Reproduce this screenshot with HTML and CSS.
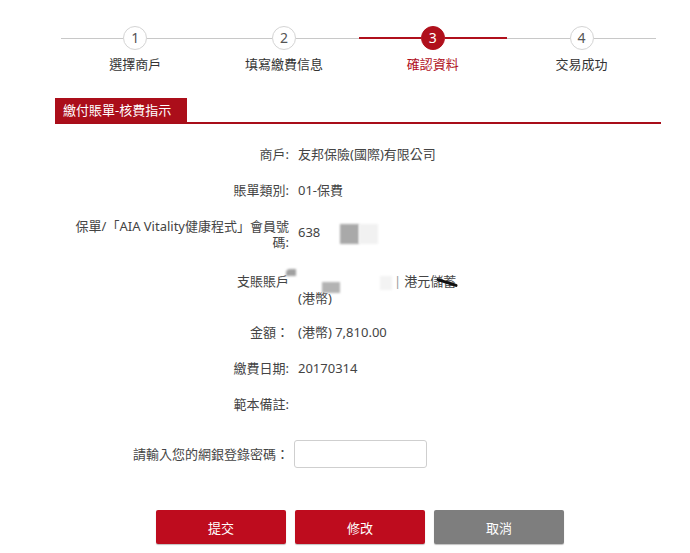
FILE: index.html
```html
<!DOCTYPE html>
<html lang="zh-Hant">
<head>
<meta charset="utf-8">
<title>確認資料</title>
<link rel="stylesheet" href="styles.css">
</head>
<body>
<div class="page">
  <div class="steps">
    <div class="step">
      <div class="track"><span class="line"></span><span class="circle">1</span><span class="line"></span></div>
      <div class="step-label">選擇商戶</div>
    </div>
    <div class="step">
      <div class="track"><span class="line"></span><span class="circle">2</span><span class="line"></span></div>
      <div class="step-label">填寫繳費信息</div>
    </div>
    <div class="step active">
      <div class="track"><span class="line"></span><span class="circle">3</span><span class="line"></span></div>
      <div class="step-label">確認資料</div>
    </div>
    <div class="step">
      <div class="track"><span class="line"></span><span class="circle">4</span><span class="line"></span></div>
      <div class="step-label">交易成功</div>
    </div>
  </div>

  <div class="section-head"><span class="tab">繳付賬單-核費指示</span></div>

  <div class="form">
    <div class="row">
      <div class="label">商戶:</div>
      <div class="value">友邦保險(國際)有限公司</div>
    </div>
    <div class="row">
      <div class="label">賬單類別:</div>
      <div class="value">01-保費</div>
    </div>
    <div class="row">
      <div class="label">保單/「AIA Vitality健康程式」會員號碼:</div>
      <div class="value">638<span class="blob blob-a"></span><span class="blob blob-b"></span></div>
    </div>
    <div class="row top">
      <div class="label">支賬賬戶</div>
      <div class="value">
        <div class="acct-line"><span class="blob blob-c"></span><span class="blob blob-d"></span><span class="blob blob-e"></span><span class="sep">|</span>港元<span class="scribble">儲蓄</span></div>
        <div>(港幣)</div>
      </div>
    </div>
    <div class="row after-top">
      <div class="label">金額：</div>
      <div class="value">(港幣) 7,810.00</div>
    </div>
    <div class="row">
      <div class="label">繳費日期:</div>
      <div class="value">20170314</div>
    </div>
    <div class="row">
      <div class="label">範本備註:</div>
      <div class="value"></div>
    </div>
    <div class="row pwd">
      <div class="label">請輸入您的網銀登錄密碼：</div>
      <div class="value"><input class="pwd-input" type="password"></div>
    </div>
  </div>

  <div class="actions">
    <button class="btn btn-red">提交</button>
    <button class="btn btn-red">修改</button>
    <button class="btn btn-grey">取消</button>
  </div>
</div>
</body>
</html>
```
FILE: styles.css
```css
* { box-sizing: border-box; }
body {
  margin: 0;
  background: #fff;
  font-family: "Noto Sans", "Noto Sans CJK TC", sans-serif;
  font-size: 13px;
  color: #444;
}
.page {
  width: 690px;
  height: 553px;
  overflow: hidden;
  padding-top: 26px;
}
.steps {
  display: flex;
  margin-left: 61px;
  width: 595px;
}
.step { flex: 1; display: flex; flex-direction: column; align-items: center; }
.track { display: flex; align-items: center; width: 100%; height: 24px; }
.line { flex: 1; height: 1px; background: #c8c8c8; }
.circle {
  width: 24px; height: 24px;
  border: 1px solid #d4d4d4;
  border-radius: 50%;
  display: flex; align-items: center; justify-content: center;
  font-size: 14px; color: #555; background: #fff;
  line-height: 1;
}
.step-label { margin-top: 5px; color: #333; line-height: 18px; }
.step.active .line { height: 2px; background: #b0101c; }
.step.active .circle { background: #b0101c; border-color: #b0101c; color: #fff; }
.step.active .step-label { color: #b0101c; }

.section-head {
  margin: 25px 0 0 55px;
  width: 606px;
  border-bottom: 2px solid #a80d19;
  display: flex;
}
.tab {
  background: #ab0e1a;
  color: #fff;
  height: 24px;
  line-height: 24px;
  padding: 0 10px 0 8px;
  width: 132px;
  white-space: nowrap;
}

.form {
  margin-top: 22px;
  display: flex;
  flex-direction: column;
  gap: 20px;
}
.row { display: flex; align-items: center; line-height: 16px; }
.row.top { align-items: flex-start; line-height: 17px; margin-top: 3px; }
.row.after-top { margin-top: -3px; }
.label {
  width: 289px;
  padding-left: 63px;
  text-align: right;
  color: #444;
}
.value { margin-left: 9px; color: #444; white-space: nowrap; }
.row.pwd { margin-top: 8px; }
.row.pwd .value { margin-left: 5px; }
.pwd-input {
  width: 133px; height: 28px;
  border: 1px solid #cfcfcf;
  border-radius: 3px;
  background: #fff;
}
.blob { display: inline-block; vertical-align: middle; filter: blur(1px); }
.blob-a { width: 19px; height: 20px; background: #a9a9a9; margin-left: 20px; }
.blob-b { width: 19px; height: 20px; background: #f1f1f1; }
.acct-line { white-space: nowrap; height: 17px; }
.blob-c { width: 10px; height: 7px; background: #a0a0a0; margin-left: -12px; vertical-align: top; margin-top: -4px; border-radius: 4px 0 0 0; }
.blob-d { width: 18px; height: 11px; background: #b3b3b3; margin-left: 26px; vertical-align: top; margin-top: 9px; margin-bottom: -20px; }
.blob-e { width: 12px; height: 14px; background: #f3f3f3; margin-left: 40px; }
.sep { color: #999; margin: 0 3px 0 2px; }
.scribble { position: relative; }
.scribble::after {
  content: "";
  position: absolute;
  left: 6px; top: 9px;
  width: 22px; height: 3px;
  background: #111;
  transform: rotate(18deg);
  border-radius: 2px;
}

.actions {
  margin: 42px 0 0 156px;
  display: flex;
  gap: 9px;
}
.btn {
  width: 130px; height: 34px;
  border: none;
  border-radius: 2px;
  color: #fff;
  font-family: "Noto Sans", "Noto Sans CJK TC", sans-serif;
  font-size: 13px;
  box-shadow: 0 1px 1px rgba(0,0,0,0.25);
}
.btn-red { background: #be0c1e; }
.btn-grey { background: #7e7e7e; }
```
